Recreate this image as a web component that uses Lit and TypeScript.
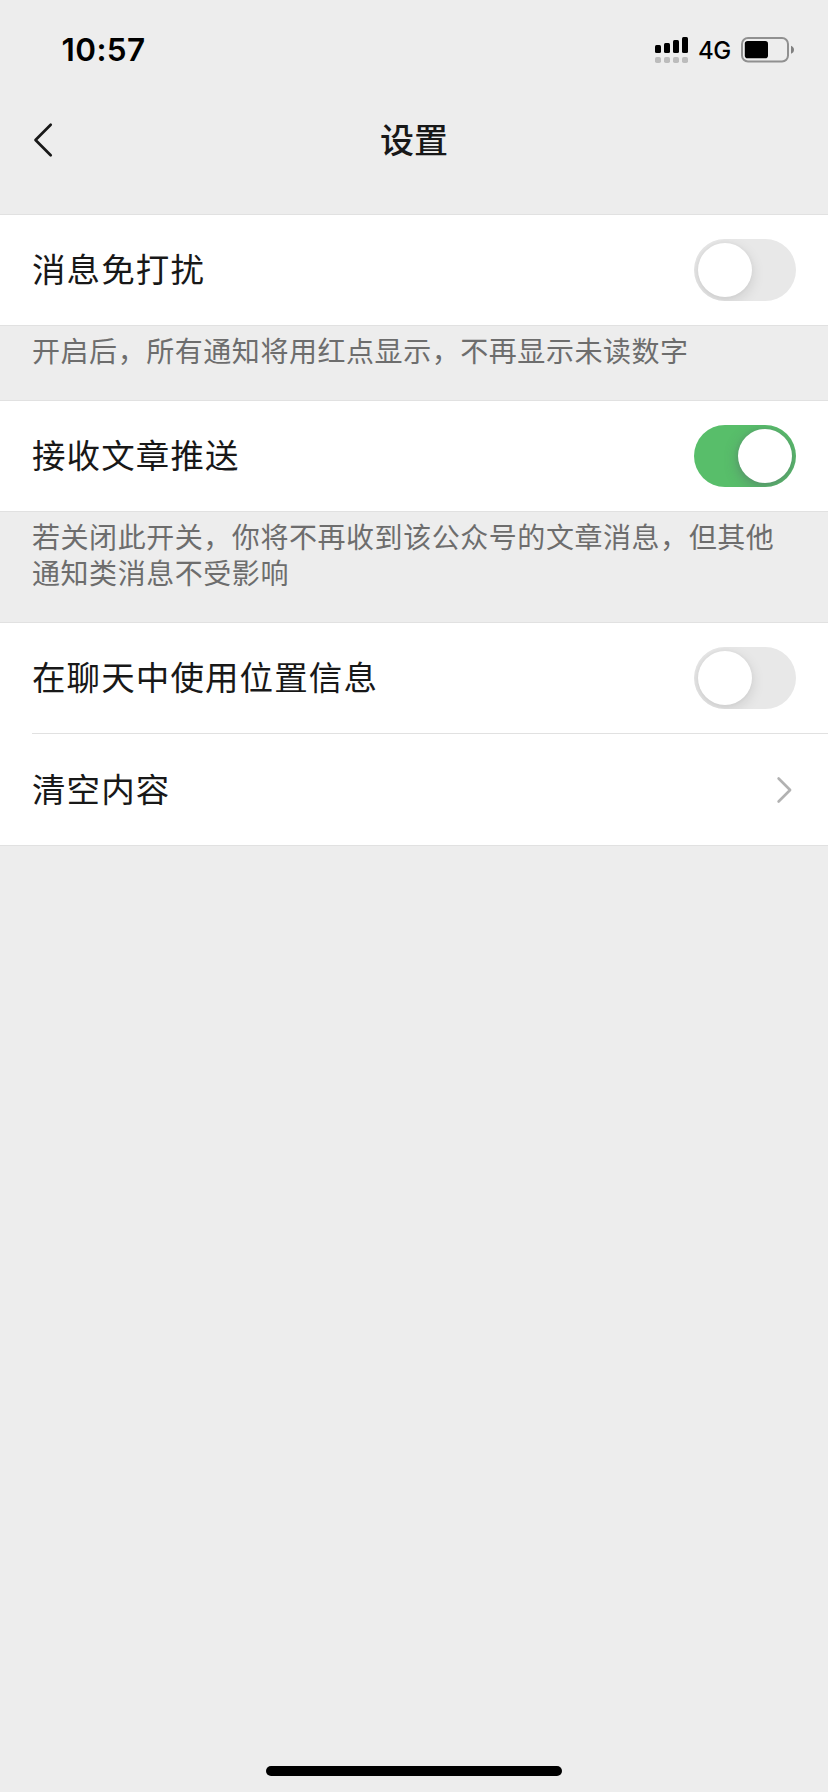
import { LitElement, html, css, svg } from "lit";
import { customElement, property } from "lit/decorators.js";
import { classMap } from "lit/directives/class-map.js";

@customElement("toggle-switch")
class ToggleSwitch extends LitElement {
  @property({ type: Boolean }) on = false;

  static styles = css`
    :host { display: block; flex: none; }
    .track {
      box-sizing: border-box;
      width: 102px;
      height: 62px;
      padding: 4px;
      border-radius: 31px;
      background: #e8e8e8;
      display: flex;
      justify-content: flex-start;
      overflow: hidden;
    }
    .track.on { background: #58be6a; justify-content: flex-end; }
    .knob {
      width: 54px;
      height: 54px;
      border-radius: 50%;
      background: #fff;
      box-shadow: 0 4px 14px rgba(0, 0, 0, 0.12), 0 0 4px rgba(0, 0, 0, 0.04);
    }
    .on .knob { box-shadow: 0 4px 14px rgba(90, 70, 110, 0.36), 0 0 4px rgba(90, 70, 110, 0.14); }
  `;

  render() {
    return html`<div class=${classMap({ track: true, on: this.on })} role="switch" aria-checked=${String(this.on)}>
      <div class="knob"></div>
    </div>`;
  }
}

@customElement("status-bar")
class StatusBar extends LitElement {
  static styles = css`
    :host {
      display: flex;
      justify-content: space-between;
      align-items: center;
      height: 100px;
      padding: 0 34px 0 61.5px;
      box-sizing: border-box;
      color: #000;
      font-family: Inter, "Liberation Sans", sans-serif;
    }
    .time { font-size: 31.5px; line-height: 40px; font-weight: 600; letter-spacing: 0.4px; }
    .right { display: flex; align-items: center; }
    .signal { margin-right: 10px; }
    .net { font-size: 24px; line-height: 30px; font-weight: 500; width: 33px; margin: 2px 10px 0 0; letter-spacing: -0.4px; }
    svg { display: block; }
  `;

  render() {
    const bars = [8, 6, 3, 0];
    return html`
      <div class="time">10:57</div>
      <div class="right">
        <svg class="signal" width="33" height="26" viewBox="0 0 33 26">
          ${bars.map(
            (y, i) => svg`
              <rect x=${i * 9} y=${y} width="6" height=${16 - y} rx="1.5" fill="#000"></rect>
              <rect x=${i * 9} y="20" width="6" height="6" rx="1.8" fill="#bcbcbc"></rect>`
          )}
        </svg>
        <div class="net">4G</div>
        <svg width="53" height="26" viewBox="0 0 53 26">
          <rect x="1" y="1" width="46" height="23.5" rx="6" fill="none" stroke="#909090" stroke-width="2"></rect>
          <rect x="3.8" y="4" width="23.2" height="17.2" rx="2.8" fill="#000"></rect>
          <path d="M50 8.800c2 .8 3 2.200 3 4s-1 3.200-3 4z" fill="#808080"></path>
        </svg>
      </div>
    `;
  }
}

@customElement("app-root")
class AppRoot extends LitElement {
  static styles = css`
    :host {
      display: flex;
      flex-direction: column;
      min-height: 1792px;
      box-sizing: border-box;
      background: #ededed;
      color: #181818;
      font-family: "Noto Sans CJK SC", sans-serif;
    }
    .nav {
      display: grid;
      grid-template-columns: 100px 1fr 100px;
      align-items: center;
      height: 80px;
      margin-bottom: 34px;
    }
    .back { display: block; margin-left: 32px; }
    .title {
      margin: 0;
      padding-bottom: 2px;
      text-align: center;
      font-size: 34px;
      line-height: 48px;
      font-weight: 500;
    }
    .group { background: #fff; border-top: 1px solid #e1e1e1; border-bottom: 1px solid #e1e1e1; }
    .row {
      display: flex;
      align-items: center;
      justify-content: space-between;
      height: 110px;
      margin-left: 32px;
      padding-right: 32px;
    }
    .row + .row { border-top: 1px solid #e1e1e1; height: 111px; }
    .label { font-size: 33.5px; line-height: 48px; letter-spacing: 1.1px; padding-bottom: 4px; }
    .hint {
      box-sizing: border-box;
      margin: 0;
      height: 74px;
      padding: 6px 32px 0;
      font-size: 28px;
      line-height: 36px;
      letter-spacing: 0.55px;
      color: #6d6d6d;
    }
    .hint.tall { height: 110px; }
    .chevron { display: block; margin-right: 3px; }
    .home { width: 296px; height: 10px; border-radius: 5px; background: #000; margin: auto auto 16px; }
  `;

  render() {
    return html`
      <status-bar></status-bar>
      <header class="nav">
        <svg class="back" width="22" height="36" viewBox="0 0 22 36">
          <path d="M18.700 2.800 3.500 18l15.200 15.200" fill="none" stroke="#181818" stroke-width="2.700" stroke-linecap="round" stroke-linejoin="round"></path>
        </svg>
        <h1 class="title">设置</h1>
      </header>
      <section class="group">
        <div class="row"><span class="label">消息免打扰</span><toggle-switch></toggle-switch></div>
      </section>
      <p class="hint">开启后，所有通知将用红点显示，不再显示未读数字</p>
      <section class="group">
        <div class="row"><span class="label">接收文章推送</span><toggle-switch on></toggle-switch></div>
      </section>
      <p class="hint tall">若关闭此开关，你将不再收到该公众号的文章消息，但其他通知类消息不受影响</p>
      <section class="group">
        <div class="row"><span class="label">在聊天中使用位置信息</span><toggle-switch></toggle-switch></div>
        <div class="row">
          <span class="label">清空内容</span>
          <svg class="chevron" width="17" height="28" viewBox="0 0 17 28">
            <path d="m2.600 2.500 11.500 11.500-11.500 11.500" fill="none" stroke="#b2b2b2" stroke-width="2.600" stroke-linecap="round" stroke-linejoin="round"></path>
          </svg>
        </div>
      </section>
      <div class="home"></div>
    `;
  }
}
